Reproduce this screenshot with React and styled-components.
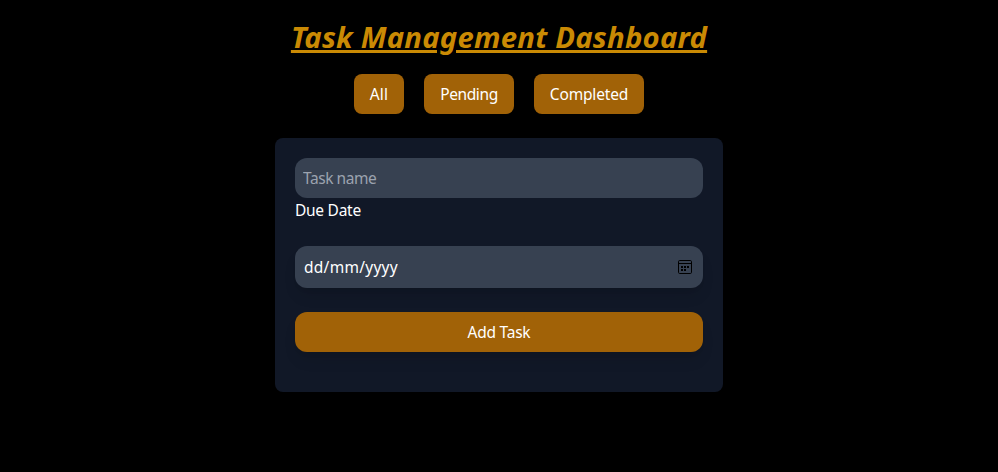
import React from "react";
import styled, { createGlobalStyle } from "styled-components";

const GlobalStyle = createGlobalStyle`
  *, *::before, *::after { box-sizing: border-box; }
  body { margin: 0; background: #000; }
`;

const Page = styled.main`
  min-height: 472px;
  padding-top: 20px;
  display: flex;
  flex-direction: column;
  align-items: center;
  background: #000;
  color: #fff;
  font: 400 15.5px/24px "Noto Sans", "Open Sans", sans-serif;
`;

const Title = styled.h1`
  margin: 0 0 18px;
  height: 36px;
  color: #ca8a04;
  font: italic 700 29.3px/35px "Noto Sans", "Open Sans", sans-serif;
  letter-spacing: 0.22px;
  text-decoration: underline;
  text-decoration-thickness: 3px;
  text-underline-offset: 2px;
  white-space: nowrap;
`;

const Filters = styled.nav`
  display: flex;
  gap: 20px;
  margin-bottom: 24px;
`;

const Button = styled.button`
  width: ${(p) => p.$width};
  height: 40px;
  padding: 0;
  border: 0;
  border-radius: 8px;
  background: #a16207;
  color: #fff;
  font: inherit;
  white-space: nowrap;
  letter-spacing: ${(p) => p.$spacing};
`;

const SubmitButton = styled(Button)`
  width: 100%;
  border-radius: 12px;
  box-shadow: 0 10px 15px -3px rgba(0, 0, 0, 0.1), 0 4px 6px -4px rgba(0, 0, 0, 0.1);
`;

const Form = styled.form`
  width: 448px;
  height: 254px;
  padding: 20px;
  display: flex;
  flex-direction: column;
  border-radius: 8px;
  background: #111827;
`;

const NameInput = styled.input`
  width: 100%;
  height: 40px;
  padding: 8px;
  border: 0;
  border-radius: 12px;
  background: #374151;
  color: #fff;
  font: inherit;
  letter-spacing: -0.45px;
  &::placeholder { color: #9ca3af; opacity: 1; }
`;

const Label = styled.label`
  height: 24px;
  margin-bottom: 24px;
  letter-spacing: -0.27px;
`;

const DateField = styled.div`
  height: 42px;
  margin-bottom: 24px;
  padding: 0 10px 0 9px;
  display: flex;
  align-items: center;
  justify-content: space-between;
  border-radius: 12px;
  background: #374151;
  letter-spacing: 0.27px;
  box-shadow: 0 10px 15px -3px rgba(0, 0, 0, 0.1), 0 4px 6px -4px rgba(0, 0, 0, 0.1);
`;

const CalendarIcon = () => (
  <svg width="16" height="16" viewBox="0 0 16 16" fill="none">
    <rect x="1.5" y="1.5" width="13" height="13" rx="1.2" stroke="#000" />
    <path d="M1.5 4.5h13" stroke="#000" />
    <path d="M4 7h2v2h-2zM7 7h2v2h-2zM10 7h2v2h-2zM4 10h2v2h-2zM7 10h2v2h-2z" fill="#000" />
  </svg>
);

export default function App() {
  return (
    <>
      <GlobalStyle />
      <Page>
        <Title>Task Management Dashboard</Title>
        <Filters>
          <Button $width="50px" $spacing="0.2px">All</Button>
          <Button $width="90px" $spacing="-0.4px">Pending</Button>
          <Button $width="110px" $spacing="-0.15px">Completed</Button>
        </Filters>
        <Form onSubmit={(e) => e.preventDefault()}>
          <NameInput placeholder="Task name" />
          <Label>Due Date</Label>
          <DateField><span>dd/mm/yyyy</span><CalendarIcon /></DateField>
          <SubmitButton $spacing="-0.25px">Add Task</SubmitButton>
        </Form>
      </Page>
    </>
  );
}
